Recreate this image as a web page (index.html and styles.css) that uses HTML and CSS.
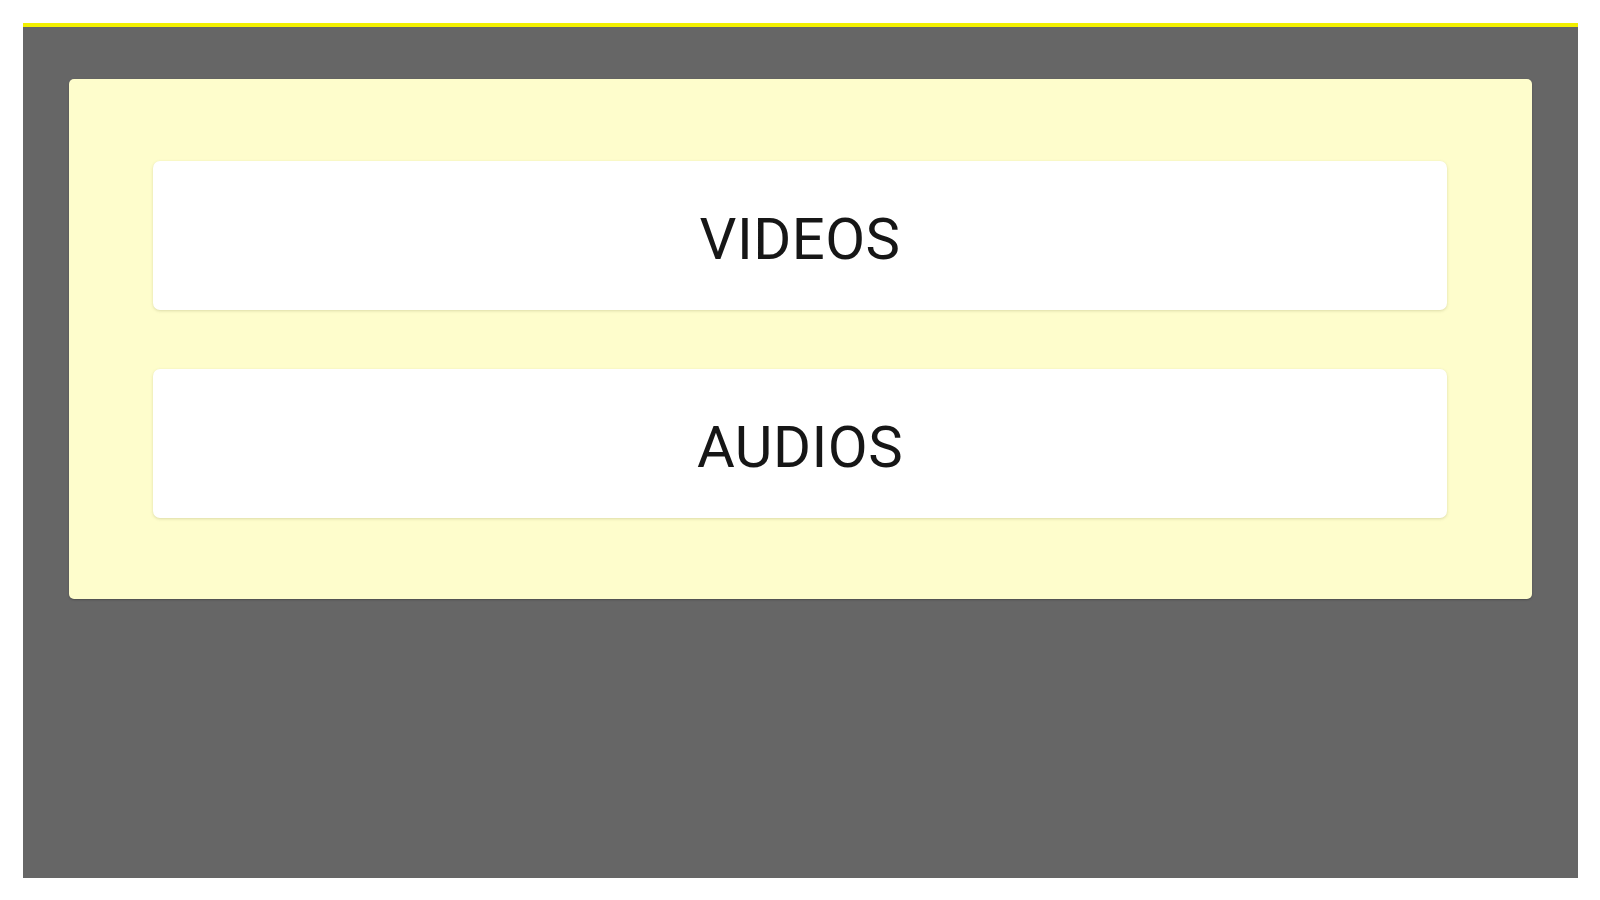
FILE: index.html
```html
<!DOCTYPE html>
<html>
<head>
<meta charset="utf-8">
<link rel="stylesheet" href="styles.css">
</head>
<body>
<div class="frame">
  <div class="panel">
    <button class="btn">VIDEOS</button>
    <button class="btn">AUDIOS</button>
  </div>
</div>
</body>
</html>
```
FILE: styles.css
```css
html, body {
  margin: 0;
  padding: 0;
  background: #ffffff;
}
body {
  width: 1600px;
  height: 900px;
  overflow: hidden;
  font-family: Roboto, "Liberation Sans", sans-serif;
}
.frame {
  margin: 23px 22px 0 23px;
  height: 855px;
  box-sizing: border-box;
  background: #666666;
  border-top: 4px solid #f2f000;
  padding: 52px 46px 0 46px;
}
.panel {
  background: #fefdcc;
  border-radius: 5px;
  padding: 82px 85px 81px 84px;
  display: flex;
  flex-direction: column;
  gap: 59px;
  box-shadow: 0 1px 2px rgba(0,0,0,0.25);
}
.btn {
  display: flex;
  align-items: center;
  justify-content: center;
  height: 149px;
  border: none;
  border-radius: 7px;
  background: #ffffff;
  box-shadow: 0 1px 3px rgba(120,120,60,0.25);
  font-family: Roboto, "Liberation Sans", sans-serif;
  font-size: 58px;
  font-weight: 400;
  color: #161616;
  letter-spacing: 0.5px;
  padding: 7px 0 0 0;
}
```
